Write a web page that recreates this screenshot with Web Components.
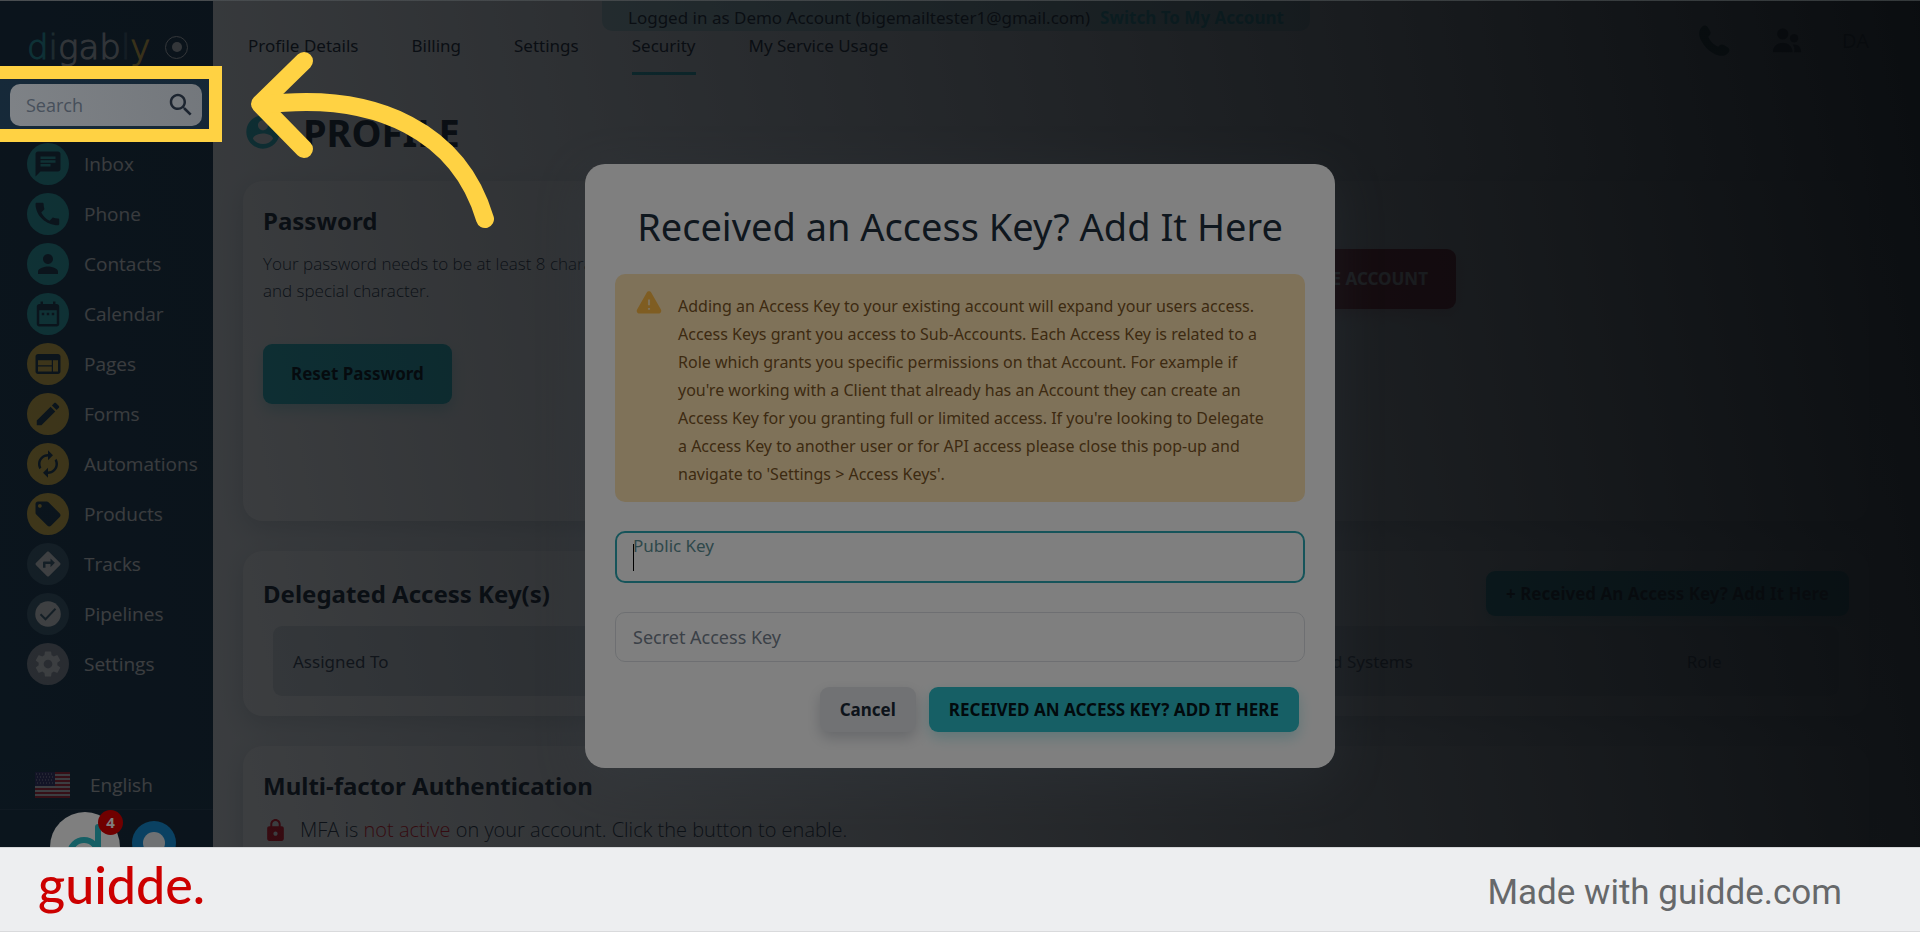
<!DOCTYPE html>
<html lang="en">
<head>
<meta charset="utf-8">
<title>Profile - Security</title>
<style>
  body {margin: 0; font-family: "Noto Sans", "Open Sans", sans-serif; color: #1b2836}
</style>
</head>
<body>

<guide-frame>
  <app-shell>
    <side-nav slot="nav">
      <nav-item icon="chat" tone="teal">Inbox</nav-item>
      <nav-item icon="phone" tone="teal">Phone</nav-item>
      <nav-item icon="person" tone="teal">Contacts</nav-item>
      <nav-item icon="calendar" tone="teal">Calendar</nav-item>
      <nav-item icon="web" tone="yellow">Pages</nav-item>
      <nav-item icon="pencil" tone="yellow">Forms</nav-item>
      <nav-item icon="renew" tone="yellow">Automations</nav-item>
      <nav-item icon="tag" tone="yellow">Products</nav-item>
      <nav-item icon="directions" tone="blue">Tracks</nav-item>
      <nav-item icon="check" tone="blue">Pipelines</nav-item>
      <nav-item icon="gear" tone="grey">Settings</nav-item>
    </side-nav>
    <top-bar></top-bar>
    <profile-page></profile-page>
  </app-shell>
  <account-banner></account-banner>
  <modal-backdrop><key-dialog></key-dialog></modal-backdrop>
  <chat-launcher></chat-launcher>
  <search-callout></search-callout>
  <brand-footer slot="footer"></brand-footer>
</guide-frame>

<script>
const ICONS = {
  chat: '<path d="M20 2H4c-1.1 0-1.99.9-1.99 2L2 22l4-4h14c1.1 0 2-.9 2-2V4c0-1.1-.9-2-2-2zM6 9h12v2H6V9zm8 5H6v-2h8v2zm4-6H6V6h12v2z"/>',
  phone: '<path d="M20 15.5c-1.25 0-2.45-.2-3.57-.57-.35-.11-.74-.03-1.02.24l-2.2 2.2c-2.83-1.44-5.15-3.75-6.59-6.59l2.2-2.21c.28-.26.36-.65.25-1C8.7 6.45 8.5 5.25 8.5 4c0-.55-.45-1-1-1H2.8c-.3 0-.8.4-.8 1 0 9.39 8.6 17 18 17 .6 0 1-.5 1-1v-3.5c0-.55-.45-1-1-1z"/>',
  person: '<path d="M12 12c2.21 0 4-1.79 4-4s-1.79-4-4-4-4 1.79-4 4 1.79 4 4 4zm0 2c-2.67 0-8 1.34-8 4v2h16v-2c0-2.66-5.33-4-8-4z"/>',
  calendar: '<path d="M9 11H7v2h2v-2zm4 0h-2v2h2v-2zm4 0h-2v2h2v-2zm2-7h-1V2h-2v2H8V2H6v2H5c-1.11 0-1.99.9-1.99 2L3 20c0 1.1.89 2 2 2h14c1.1 0 2-.9 2-2V6c0-1.1-.9-2-2-2zm0 16H5V9h14v11z"/>',
  web: '<path d="M20 4H4c-1.1 0-1.99.9-1.99 2L2 18c0 1.1.9 2 2 2h16c1.1 0 2-.9 2-2V6c0-1.1-.9-2-2-2zm-5 14H4v-4h11v4zm0-5H4V9h11v4zm5 5h-4V9h4v9z"/>',
  pencil: '<path d="M3 17.25V21h3.75L17.81 9.94l-3.75-3.75L3 17.25zM20.71 7.04c.39-.39.39-1.02 0-1.41l-2.34-2.34c-.39-.39-1.02-.39-1.41 0l-1.83 1.83 3.75 3.75 1.83-1.83z"/>',
  renew: '<path d="M12 6v3l4-4-4-4v3c-4.42 0-8 3.58-8 8 0 1.57.46 3.03 1.24 4.26L6.7 14.8c-.45-.83-.7-1.79-.7-2.8 0-3.31 2.69-6 6-6zm6.76 1.74L17.3 9.2c.44.84.7 1.79.7 2.8 0 3.31-2.69 6-6 6v-3l-4 4 4 4v-3c4.42 0 8-3.58 8-8 0-1.57-.46-3.03-1.24-4.26z"/>',
  tag: '<path d="M21.41 11.58l-9-9C12.05 2.22 11.55 2 11 2H4c-1.1 0-2 .9-2 2v7c0 .55.22 1.05.59 1.42l9 9c.36.36.86.58 1.41.58.55 0 1.05-.22 1.41-.59l7-7c.37-.36.59-.86.59-1.41 0-.55-.23-1.06-.59-1.42zM5.5 7C4.67 7 4 6.33 4 5.5S4.67 4 5.5 4 7 4.67 7 5.5 6.33 7 5.5 7z"/>',
  directions: '<path d="M21.71 11.29l-9-9c-.39-.39-1.02-.39-1.41 0l-9 9c-.39.39-.39 1.02 0 1.41l9 9c.39.39 1.02.39 1.41 0l9-9c.39-.38.39-1.01 0-1.41zM14 14.5V12h-4v3H8v-4c0-.55.45-1 1-1h5V7.5l3.5 3.5-3.5 3.5z"/>',
  check: '<circle cx="12" cy="12" r="10.2"/><path d="M6 12.2l4 4 8-8.4" fill="none" stroke="var(--cut)" stroke-width="1.6"/>',
  gear: '<path d="M19.43 12.98c.04-.32.07-.64.07-.98s-.03-.66-.07-.98l2.11-1.65c.19-.15.24-.42.12-.64l-2-3.46c-.12-.22-.39-.3-.61-.22l-2.49 1c-.52-.4-1.08-.73-1.69-.98l-.38-2.65C14.46 2.18 14.25 2 14 2h-4c-.25 0-.46.18-.49.42l-.38 2.65c-.61.25-1.17.59-1.69.98l-2.49-1c-.23-.09-.49 0-.61.22l-2 3.46c-.13.22-.07.49.12.64l2.11 1.65c-.04.32-.07.65-.07.98s.03.66.07.98l-2.11 1.65c-.19.15-.24.42-.12.64l2 3.46c.12.22.39.3.61.22l2.49-1c.52.4 1.08.73 1.69.98l.38 2.65c.03.24.24.42.49.42h4c.25 0 .46-.18.49-.42l.38-2.65c.61-.25 1.17-.59 1.69-.98l2.49 1c.23.09.49 0 .61-.22l2-3.46c.12-.22.07-.49-.12-.64l-2.11-1.65zM12 15.5c-1.93 0-3.5-1.57-3.5-3.5s1.57-3.5 3.5-3.5 3.5 1.57 3.5 3.5-1.57 3.5-3.5 3.5z"/>',
  search: '<path d="M15.5 14h-.79l-.28-.27C15.41 12.59 16 11.11 16 9.5 16 5.91 13.09 3 9.5 3S3 5.91 3 9.5 5.91 16 9.5 16c1.61 0 3.09-.59 4.23-1.57l.27.28v.79l5 4.99L20.49 19l-4.99-5zm-6 0C7.01 14 5 11.99 5 9.5S7.01 5 9.5 5 14 7.01 14 9.5 11.99 14 9.5 14z"/>',
  account: '<path d="M12 2C6.48 2 2 6.48 2 12s4.48 10 10 10 10-4.48 10-10S17.52 2 12 2zm0 3c1.66 0 3 1.34 3 3s-1.34 3-3 3-3-1.34-3-3 1.34-3 3-3zm0 14.2c-2.5 0-4.71-1.28-6-3.22.03-1.99 4-3.08 6-3.08 1.99 0 5.97 1.09 6 3.08-1.29 1.94-3.5 3.22-6 3.22z"/>',
  lock: '<path d="M18 8h-1V6c0-2.76-2.24-5-5-5S7 3.24 7 6v2H6c-1.1 0-2 .9-2 2v10c0 1.1.9 2 2 2h12c1.1 0 2-.9 2-2V10c0-1.1-.9-2-2-2zm-6 9c-1.1 0-2-.9-2-2s.9-2 2-2 2 .9 2 2-.9 2-2 2zm3.1-9H8.9V6c0-1.71 1.39-3.1 3.1-3.1 1.71 0 3.1 1.39 3.1 3.1v2z"/>',
  call: '<path d="M4 2.5C5.2 1.3 7 1.4 7.9 2.9l1.5 2.5c.6 1 .4 2.2-.4 3l-.8.8c.9 2.7 3.9 5.7 6.6 6.6l.8-.8c.8-.8 2-1 3-.4l2.5 1.5c1.5.9 1.6 2.7.4 3.9-2.4 2.5-5.900 2.4-9.400.5C8.200 18.500 5.500 15.800 3.500 11.900 1.600 8.400 1.500 4.900 4 2.500z"/>',
  people: '<circle cx="9" cy="7" r="4"/><circle cx="17" cy="10" r="3"/><path d="M2 20c0-9 14-9 14 0zM17 20h5c0-4-2-6-6-5.5 1 1.5 1.5 3 1 5.5z"/>',
  warning: '<path d="M10 3.2c.9-1.6 3.1-1.6 4 0l8.2 14.3c.9 1.6-.2 3.5-2 3.5H3.8c-1.8 0-2.9-1.9-2-3.500z"/><path d="M12 9v5M12 16.200v1.600" stroke="#ffe4b3" stroke-width="1.8"/>'
}

function icon(name, size = 24) {
  return `<svg width="${size}" height="${size}" viewBox="0 0 24 24" fill="currentColor" aria-hidden="true">${ICONS[name]}</svg>`
}

/** Registers an element. html is a string, or a function of the host when attributes matter. */
function define(name, html) {
  const template = document.createElement('template')
  if (typeof html == 'string') template.innerHTML = html
  customElements.define(name, class extends HTMLElement {
    constructor() {
      super()
      const root = this.attachShadow({mode: 'open'})
      if (typeof html == 'string') root.append(template.content.cloneNode(true))
      else root.innerHTML = html(this)
    }
  })
}

define('guide-frame', `
  <style>
    :host {display: flex; flex-direction: column; height: 100vh; position: relative; overflow: hidden}
    .view {flex: 1; min-height: 0; overflow: hidden}
    ::slotted([slot=footer]) {position: relative; z-index: 5}
  </style>
  <div class="view"><slot></slot></div>
  <slot name="footer"></slot>
`)

define('app-shell', `
  <style>
    :host {display: grid; grid-template-columns: 213px 1fr; height: 100%; background: #f4f6f8}
    main {overflow: hidden; padding: 0 51px 0 30px}
  </style>
  <slot name="nav"></slot>
  <main><slot></slot></main>
`)

define('side-nav', `
  <style>
    :host {display: flex; flex-direction: column; background: #1c3d56; color: #f1f2f3; overflow: hidden; font-family: "Open Sans", sans-serif}
    .brand {display: flex; align-items: center; gap: 15px; height: 67px; padding: 27px 0 0 27px; box-sizing: border-box}
    .logo {font: 200 34px/40px "DejaVu Sans", sans-serif; color: #cfd6dc; -webkit-text-stroke: 1px currentColor}
    .logo b {font-weight: 200}
    .t {color: #2cbfca}
    .s {color: #6fa5ad}
    .d {color: #4b6a80}
    .y {color: #f6cc50}
    .pin {width: 23px; height: 23px; padding: 0; border: 1px solid #dfe3e6; border-radius: 50%; background: none; display: grid; place-items: center}
    .pin i {width: 10px; height: 10px; border-radius: 50%; background: #dfe3e6}
    .search {display: flex; align-items: center; margin: 17px 11px 17px 10px; height: 42px; padding: 0 6px 0 16px;
      background: #fff; border-radius: 10px; box-sizing: border-box; color: #2c3646; flex: none}
    input {flex: 1; min-width: 0; border: 0; padding: 0; outline: 0; background: none; font: 18px/24px "Open Sans", sans-serif}
    input::placeholder {color: #8a94a4}
    nav {display: flex; flex-direction: column; gap: 8px; padding-left: 27px; flex: 1}
    .lang {display: flex; align-items: center; gap: 20px; height: 50px; flex: none; padding: 0 0 0 35px; margin-bottom: 37px;
      border: 0; border-bottom: 1px solid #31506a; background: #1d4059; color: inherit; font: 19px/26px "Open Sans", sans-serif}
  </style>
  <div class="brand">
    <div class="logo"><b class="t">d</b><b class="s">i</b>gab<b class="d">l</b><b class="y">y</b></div>
    <button class="pin" aria-label="Pin menu"><i></i></button>
  </div>
  <div class="search"><input type="text" placeholder="Search" aria-label="Search">${icon('search', 30)}</div>
  <nav><slot></slot></nav>
  <button class="lang">
    <svg width="35" height="26" viewBox="0 0 35 26" aria-hidden="true">
      <path fill="#e8e8ee" d="M0 0h35v26H0z"/>
      <path stroke="#d0283f" stroke-width="2" d="M0 1h35M0 5h35M0 9h35M0 13h35M0 17h35M0 21h35M0 25h35"/>
      <path fill="#3c3b7e" d="M0 0h20v14H0z"/>
      <path stroke="#c8c8e0" stroke-dasharray="1 2" d="M1 2h18M2 5h17M1 8h18M2 11h17"/>
    </svg>
    English
  </button>
`)

define('nav-item', host => `
  <style>
    :host {display: block}
    a {display: flex; align-items: center; gap: 15px; color: inherit; text-decoration: none; font-size: 19px; line-height: 26px}
    .dot {width: 42px; height: 42px; border-radius: 50%; display: grid; place-items: center; color: #1c3d56}
    .teal {background: #2ebcc2}
    .yellow {background: #f4cb4c}
    .blue {background: #44687e; --cut: #44687e; color: #f4f4f4}
    .grey {background: #9aa1ad; color: #eceef0}
  </style>
  <a href="#"><span class="dot ${host.getAttribute('tone')}">${icon(host.getAttribute('icon'), 30)}</span><slot></slot></a>
`)

define('top-bar', `
  <style>
    :host {display: flex; align-items: flex-start; justify-content: space-between; padding: 23px 0 0 5px; height: 75px; box-sizing: border-box}
    nav {display: flex; gap: 53px; padding-top: 10px}
    a {color: inherit; text-decoration: none; font-size: 17px; line-height: 26px; padding-bottom: 13px; border-bottom: 3px solid transparent}
    a[aria-current] {border-color: #2cbfca}
    .tools {display: flex; align-items: center; gap: 38px}
    button {border: 0; background: none; padding: 0; display: grid; font: 20px/24px "Noto Sans", sans-serif; color: #10151c}
    .call {color: #003c30}
  </style>
  <nav>
    <a href="#">Profile Details</a>
    <a href="#">Billing</a>
    <a href="#">Settings</a>
    <a href="#" aria-current="page">Security</a>
    <a href="#">My Service Usage</a>
  </nav>
  <div class="tools">
    <button class="call" aria-label="Call">${icon('call', 36)}</button>
    <button aria-label="People">${icon('people', 34)}</button>
    <button>DA</button>
  </div>
`)

define('account-banner', `
  <style>
    :host {position: absolute; top: 0; left: 602px; padding: 5px 26px 0; display: flex; gap: 10px; background: #b9dfe2;
      border-radius: 0 0 10px 10px; font-size: 17px; line-height: 26px; white-space: nowrap}
    a {color: #2cbfca; font-weight: 700; text-decoration: none}
  </style>
  <span>Logged in as Demo Account (bigemailtester1@gmail.com)</span>
  <a href="#">Switch To My Account</a>
`)

define('info-card', `
  <style>
    :host {display: block; background: #fff; border-radius: 20px; padding: 20px; margin-bottom: 30px; box-sizing: border-box;
      box-shadow: 0 8px 24px rgba(40, 60, 80, .16)}
    header {display: flex; justify-content: space-between; align-items: center}
    h2 {margin: 0; font-size: 24px; line-height: 40px; font-weight: 700}
  </style>
  <header><h2><slot name="title"></slot></h2><slot name="action"></slot></header>
  <slot></slot>
`)

define('app-button', `
  <style>
    :host {display: inline-block}
    button {border: 0; border-radius: 9px; height: 45px; padding: 0 20px; white-space: nowrap;
      font: 700 17px/22px "Noto Sans", sans-serif; background: #2cbfca; color: #04141a; box-shadow: 0 6px 14px rgba(44, 191, 202, .3)}
    :host([large]) button {height: 60px; padding: 0 28px}
    :host([tone=red]) button {background: #a8141c; color: #fff; box-shadow: 0 6px 14px rgba(200, 20, 40, .2)}
    :host([tone=grey]) button {background: #e2e4e8; color: #1b2836; box-shadow: 0 6px 14px rgba(60, 70, 90, .25)}
  </style>
  <button type="button"><slot></slot></button>
`)

define('profile-page', `
  <style>
    :host {display: block}
    h1 {display: flex; align-items: center; gap: 20px; margin: 30px 0 22px; font-size: 38px; line-height: 54px; font-weight: 700}
    h1 svg {color: #2cbfca}
    .security {min-height: 340px}
    .cols {display: grid; grid-template-columns: 1fr 1fr}
    p {margin: 9px 0 40px; font: 300 17px/27px "Open Sans", sans-serif; color: #2a3648}
    .danger {max-width: 400px; text-align: right; padding-top: 8px}
    table {width: calc(100% - 20px); margin: 10px 10px 0; border-collapse: collapse; background: #dfe4e8; border-radius: 9px}
    th {height: 70px; padding: 0 20px; text-align: left; font-size: 17px; font-weight: 400; color: #3c4858; box-sizing: border-box}
    .mfa {display: flex; align-items: center; gap: 12px; margin: 0; padding-top: 8px; font-size: 20px; line-height: 32px}
    .mfa svg {color: #e81224}
    .mfa b {font-weight: 300; color: #f01224}
  </style>
  <h1>${icon('account', 40)}PROFILE</h1>
  <info-card class="security">
    <span slot="title">Password</span>
    <div class="cols">
      <div>
        <p>Your password needs to be at least 8 characters, with one number<br>and special character.</p>
        <app-button large>Reset Password</app-button>
      </div>
      <div class="danger"><app-button large tone="red">DELETE ACCOUNT</app-button></div>
    </div>
  </info-card>
  <info-card>
    <span slot="title">Delegated Access Key(s)</span>
    <app-button slot="action">+ Received An Access Key? Add It Here</app-button>
    <table>
      <colgroup><col style="width: 63%"><col style="width: 26%"><col></colgroup>
      <tr><th>Assigned To</th><th>Allowed Systems</th><th>Role</th></tr>
    </table>
  </info-card>
  <info-card>
    <span slot="title">Multi-factor Authentication</span>
    <p class="mfa">${icon('lock', 25)}<span>MFA is <b>not active</b> on your account. Click the button to enable.</span></p>
  </info-card>
`)

define('modal-backdrop', `
  <style>
    :host {position: absolute; inset: 0; display: flex; align-items: center; justify-content: center;
      background: linear-gradient(79deg, rgba(17, 24, 32, .5), rgba(17, 24, 32, .72) 45%, rgba(17, 23, 29, .98))}
  </style>
  <slot></slot>
`)

define('text-field', `
  <style>
    :host {display: block}
    .box {display: grid; height: 50px; padding: 0 17px; border: 1px solid #dcdfe4; border-radius: 10px; box-sizing: border-box}
    .box > * {grid-area: 1 / 1}
    label {align-self: center; font-size: 18px; line-height: 26px; color: #76828f}
    input {border: 0; outline: 0; padding: 0; background: none; min-width: 0; font: 18px/26px "Noto Sans", sans-serif}
    .caret {display: none; width: 1px; height: 27px; background: #000; align-self: center}
    :host([active]) .box {border: 2px solid #2ca9b4; padding: 0 16px; height: 52px}
    :host([active]) label {align-self: start; font-size: 17px; color: #5d9096}
    :host([active]) .caret {display: block}
  </style>
  <div class="box">
    <label for="field"><slot></slot></label>
    <input id="field" type="text">
    <i class="caret"></i>
  </div>
`)

define('key-dialog', `
  <style>
    :host {display: block; width: 750px; box-sizing: border-box; padding: 35px 30px 36px; background: #fff; border-radius: 20px;
      box-shadow: 0 12px 50px rgba(120, 135, 155, .22)}
    h2 {margin: 0 0 21px; text-align: center; font-size: 38px; line-height: 54px; font-weight: 400; color: #1f2f3d}
    .note {display: flex; gap: 15px; padding: 18px 10px 14px 20px; background: #ffe4b3; border-radius: 10px; color: #7a5524;
      font-size: 16px; line-height: 28px; margin-bottom: 29px}
    .note svg {flex: none; color: #ffbb44; margin-top: -3px}
    .note p {margin: 0}
    text-field {margin-bottom: 29px}
    .actions {display: flex; justify-content: flex-end; gap: 13px; padding-right: 6px; margin-top: -4px}
  </style>
  <h2>Received an Access Key? Add It Here</h2>
  <div class="note">${icon('warning', 28)}<p>Adding an Access Key to your existing account will expand your users access.<br>
    Access Keys grant you access to Sub-Accounts. Each Access Key is related to a<br>
    Role which grants you specific permissions on that Account. For example if<br>
    you're working with a Client that already has an Account they can create an<br>
    Access Key for you granting full or limited access. If you're looking to Delegate<br>
    a Access Key to another user or for API access please close this pop-up and<br>
    navigate to 'Settings &gt; Access Keys'.</p></div>
  <text-field active>Public Key</text-field>
  <text-field>Secret Access Key</text-field>
  <div class="actions">
    <app-button tone="grey">Cancel</app-button>
    <app-button>RECEIVED AN ACCESS KEY? ADD IT HERE</app-button>
  </div>
`)

// floating bubbles in the bottom left corner, half hidden by the footer
define('chat-launcher', `
  <style>
    :host {position: absolute; left: 50px; bottom: 50px; display: flex; align-items: center; gap: 12px}
    button {border: 0; padding: 0; background: none; display: block; position: relative}
    svg {display: block}
    .count {position: absolute; top: -2px; right: -3px; width: 25px; height: 25px; border-radius: 50%; background: #e00000; color: #fff;
      font: 700 15px/25px "Noto Sans", sans-serif; text-align: center}
  </style>
  <button aria-label="Messages">
    <svg width="70" height="70" viewBox="0 0 70 70"><circle cx="35" cy="35" r="35" fill="#fff"/>
      <g fill="none" stroke="#2cbfca" stroke-width="6" stroke-linecap="round"><circle cx="34" cy="42" r="14"/><path d="M48 15v41"/></g></svg>
    <span class="count">4</span>
  </button>
  <button aria-label="Help">
    <svg width="45" height="54" viewBox="0 0 45 54"><circle cx="22" cy="23" r="22" fill="#1583c4"/><circle cx="22" cy="23" r="11" fill="#dfe3e6"/></svg>
  </button>
`)

define('search-callout', `
  <style>
    :host {position: absolute; inset: 0; pointer-events: none}
    .ring {position: absolute; left: -13px; top: 66px; width: 235px; height: 76px; box-sizing: border-box;
      border: 13px solid #ffd243; box-shadow: 0 0 0 2000px rgba(0, 0, 0, .5)}
    .edge {position: relative; height: 1px; background: linear-gradient(90deg, #4a4e51, #34393b)}
    svg {position: absolute; left: 240px; top: 40px}
  </style>
  <div class="ring"></div>
  <div class="edge"></div>
  <svg width="270" height="200" viewBox="240 40 270 200" fill="none" stroke="#ffd243" stroke-width="18" stroke-linecap="round" stroke-linejoin="round">
    <path d="M304 61L260 104L304 149"/>
    <path d="M262 105C380 90 460 135 485 219"/>
  </svg>
`)

define('brand-footer', `
  <style>
    :host {display: flex; align-items: center; justify-content: space-between; height: 85px; box-sizing: border-box; padding: 0 78px 0 38px;
      background: #edeef0; border-top: 1px solid #d5d6d8; border-bottom: 1px solid #d9dadc}
    .logo {font: 500 52px/60px Lato, sans-serif; color: #c00; padding-bottom: 12px}
    .made {font: 35px/42px Roboto, sans-serif; color: #66686a; padding-top: 7px}
  </style>
  <span class="logo">guidde.</span>
  <span class="made">Made with guidde.com</span>
`)
</script>
</body>
</html>
